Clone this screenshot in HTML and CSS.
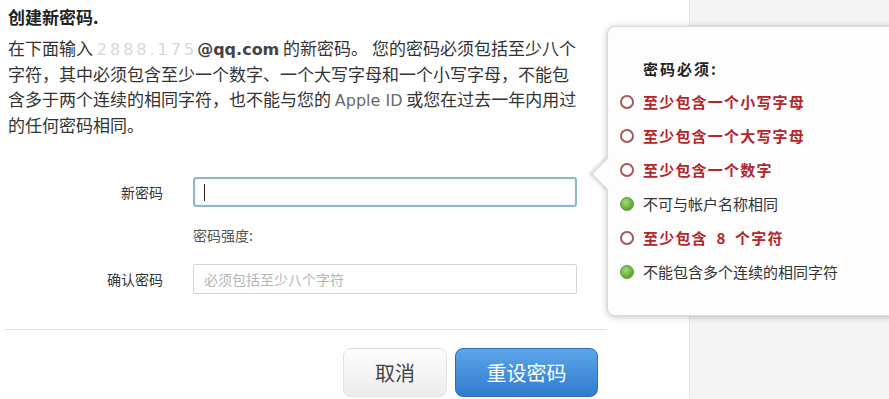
FILE: index.html
```html
<!DOCTYPE html>
<html lang="zh-CN">
  <head>
    <meta charset="UTF-8" />
    <title>创建新密码</title>
    <link rel="stylesheet" href="styles.css">
  </head>
  <body>
    <div class="page">
      <main class="content">
        <h1>创建新密码.</h1>
        <p class="intro">
          在下面输入 <span class="mail"><span class="hidden">2888.175</span>@qq.com</span> 的新密码。 您的密码必须包括至少八个<br />
          字符，其中必须包含至少一个数字、一个大写字母和一个小写字母，不能包<br />
          含多于两个连续的相同字符，也不能与您的 <span class="latin">Apple ID</span> 或您在过去一年内用过<br />
          的任何密码相同。
        </p>

        <form class="reset-form">
          <div class="row">
            <label for="pw">新密码</label>
            <div class="field is-focus"><input id="pw" type="password" /></div>
          </div>
          <div class="row strength">
            <span class="label"></span>
            <span>密码强度:</span>
          </div>
          <div class="row">
            <label for="pw2">确认密码</label>
            <div class="field"><input id="pw2" type="password" placeholder="必须包括至少八个字符" /></div>
          </div>
        </form>

        <hr />

        <footer class="actions">
          <button class="btn">取消</button>
          <button class="btn is-primary">重设密码</button>
        </footer>
      </main>

      <aside class="side"></aside>

      <div class="tip">
        <h2>密码必须:</h2>
        <ul>
          <li class="is-bad">至少包含一个小写字母</li>
          <li class="is-bad">至少包含一个大写字母</li>
          <li class="is-bad">至少包含一个数字</li>
          <li class="is-ok">不可与帐户名称相同</li>
          <li class="is-bad">至少包含 <span class="num">8</span> 个字符</li>
          <li class="is-ok">不能包含多个连续的相同字符</li>
        </ul>
      </div>
    </div>
  </body>
</html>
```

FILE: styles.css
```css
*,
*::before,
*::after {
  box-sizing: border-box;
  margin: 0;
  padding: 0;
}

body {
  font-family: 'Noto Sans CJK SC', 'Noto Sans', sans-serif;
  color: #333;
  background: #fff;
  width: 889px;
  height: 399px;
  overflow: hidden;
}

.page {
  position: relative;
  display: flex;
  height: 399px;
}

.content {
  width: 690px;
  flex-shrink: 0;
  padding: 5px 0 0 8px;
  border-right: 1px solid #e4e4e4;
}

h1 {
  font-size: 17px;
  font-weight: bold;
  line-height: 24px;
  color: #222;
}

.intro {
  margin-top: 6px;
  font-size: 17px;
  line-height: 25.5px;
  color: #333;
  white-space: nowrap;

  & span {
    line-height: 1;
  }
}

.mail {
  font-family: 'DejaVu Sans', sans-serif;
  font-size: 16px;
  font-weight: bold;
  color: #444;

  & .hidden {
    color: #d8d8d8;
    font-weight: normal;
    letter-spacing: 3px;
  }
}

.latin {
  font-family: 'DejaVu Sans', sans-serif;
  font-size: 16px;
  color: #6b6b6b;
}

.reset-form {
  margin-top: 40px;
  display: flex;
  flex-direction: column;

  & .row {
    display: flex;
    align-items: center;
    gap: 30px;
    font-size: 14px;
  }

  & label,
  & .label {
    width: 155px;
    text-align: right;
    color: #333;
  }

  & .strength {
    margin: 17px 0 18px;
    line-height: 22px;
    color: #555;
  }
}

.field {
  position: relative;
  width: 384px;
  height: 30px;
  border: 1px solid #d4d4d4;
  border-radius: 2px;
  background: #fff;

  & input {
    width: 100%;
    height: 100%;
    border: 0;
    outline: 0;
    background: transparent;
    padding: 0 10px;
    font-family: inherit;
    font-size: 14px;
    color: #333;

    &::placeholder {
      color: #b5b5b5;
    }
  }

  &.is-focus {
    border: 2px solid #8fb6cc;
    border-radius: 3px;
    box-shadow: inset 0 0 3px #d6ecf4;

    &::after {
      content: '';
      position: absolute;
      left: 9px;
      top: 5px;
      width: 1px;
      height: 17px;
      background: #222;
    }
  }
}

hr {
  margin: 35px 0 0 -3px;
  width: 602px;
  border: 0;
  border-top: 1px solid #e2e2e2;
}

.actions {
  width: 590px;
  margin-top: 18px;
  display: flex;
  justify-content: flex-end;
  gap: 8px;
}

.btn {
  height: 49px;
  width: 104px;
  border: 1px solid #e2e2e2;
  border-radius: 8px;
  background: linear-gradient(#fdfdfd, #ececec);
  font-family: inherit;
  font-size: 20px;
  color: #444;
  cursor: pointer;

  &.is-primary {
    width: 143px;
    border-color: #2c6fb8;
    background: linear-gradient(#5ea6ea, #2f7ccd);
    color: #fff;
  }
}

.side {
  flex: 1;
  background: #f4f4f4;
}

.tip {
  position: absolute;
  left: 607px;
  top: 26px;
  width: 300px;
  height: 290px;
  background: #fdfdfd;
  border: 1px solid #dadada;
  border-radius: 8px;
  box-shadow: 0 1px 6px rgba(0, 0, 0, 0.25);
  padding: 31px 0 0 35px;

  &::before {
    content: '';
    position: absolute;
    left: -12px;
    top: 135px;
    width: 24px;
    height: 24px;
    background: #fdfdfd;
    border-left: 1px solid #d0d0d0;
    border-bottom: 1px solid #d0d0d0;
    box-shadow: -2px 2px 3px rgba(0, 0, 0, 0.12);
    transform: rotate(45deg);
  }

  & h2 {
    font-size: 15px;
    font-weight: bold;
    letter-spacing: 2px;
    line-height: 22px;
    color: #222;
  }

  & ul {
    list-style: none;
    margin-top: 5px;
  }

  & li {
    position: relative;
    height: 34px;
    line-height: 34px;
    font-size: 15px;
    color: #333;

    &::before {
      content: '';
      position: absolute;
      left: -23px;
      top: 10px;
      width: 14px;
      height: 14px;
      border-radius: 50%;
    }

    &.is-bad {
      font-weight: bold;
      letter-spacing: 1.2px;
      color: #b3262a;

      &::before {
        border: 2px solid #a8585a;
        background: #fff;
      }
    }

    &.is-ok::before {
      background: radial-gradient(circle at 40% 35%, #a7dc7a, #5aa531 70%);
      border: 1px solid #5d9a39;
    }

    & .num {
      margin: 0 4px;
    }
  }
}
```
